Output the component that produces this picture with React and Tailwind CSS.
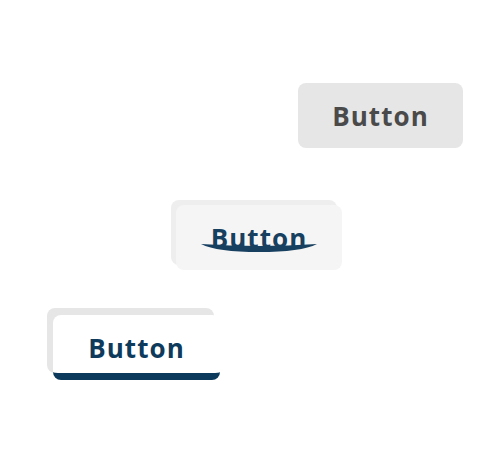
export default function App() {
  const label = "font-['Open_Sans',sans-serif] font-bold text-[26px] leading-none tracking-[0.04em]";

  return (
    <div className="w-[500px] h-[472px] bg-white relative overflow-hidden">
      <div className="flex flex-col pt-[83px]">
        {/* plain */}
        <button className={`ml-[298px] w-[165px] h-[65px] rounded-[8px] bg-[#e6e6e6] text-[#4a4a4a] flex items-center justify-center ${label}`}>
          Button
        </button>

        {/* layered with arc underline */}
        <button className={`mt-[57px] ml-[176px] w-[166px] h-[65px] rounded-[8px] bg-[#f5f5f5] shadow-[-5px_-5px_0_#eeeeee] text-[#173f5f] flex items-center justify-center ${label}`}>
          <span className="relative">
            <svg className="absolute left-[-10px] top-[18px]" width="116" height="10" viewBox="0 0 116 10">
              <path d="M0 1 Q58 5 116 1 Q100 9 58 9 Q16 9 0 1 Z" fill="#173f5f" />
            </svg>
            <span className="relative">Button</span>
          </span>
        </button>

        {/* raised with bottom bar */}
        <button className={`mt-[45px] ml-[53px] w-[167px] h-[65px] rounded-[8px] bg-white border-b-[7px] border-[#0b3a5c] shadow-[-6px_-7px_0_#e6e6e6] text-[#0e3a5c] flex items-center justify-center pt-[8px] ${label}`}>
          Button
        </button>
      </div>
    </div>
  );
}
